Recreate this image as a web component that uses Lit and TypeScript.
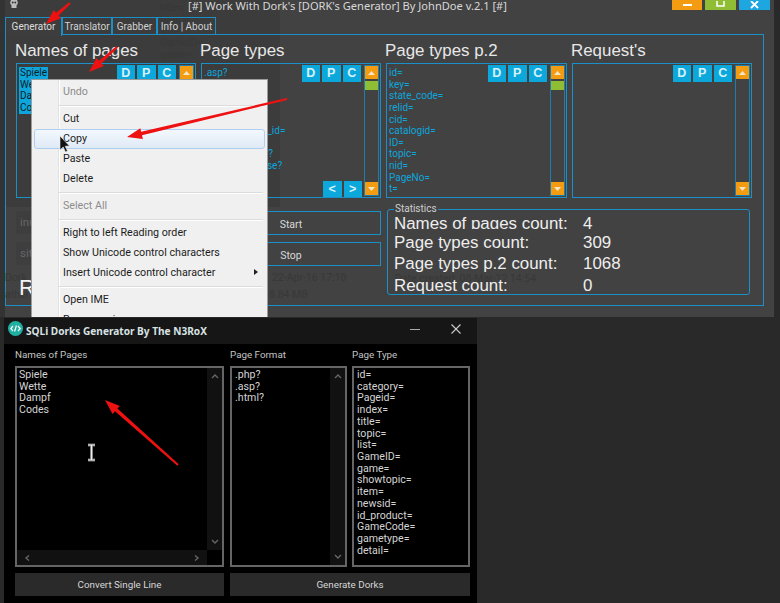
import { LitElement, html, css, svg } from "lit";
import { customElement } from "lit/decorators.js";

const BLUE_LIST_1 = ["Spiele", "Wette", "Dampf", "Codes"];
const BLUE_LIST_2 = [".asp?", ".cfm?", ".php?", ".html?", ".jsp?", "detail_product_id=", ".aspx?", "index_browser?", "index_showcase?"];
const BLUE_LIST_3 = ["id=", "key=", "state_code=", "relid=", "cid=", "catalogid=", "ID=", "topic=", "nid=", "PageNo=", "t="];
const TYPES = ["id=", "category=", "Pageid=", "index=", "title=", "topic=", "list=", "GameID=", "game=", "showtopic=", "item=", "newsid=", "id_product=", "GameCode=", "gametype=", "detail="];
const TABS: [string, number][] = [["Generator", 57], ["Translator", 50], ["Grabber", 45], ["Info | About", 59]];
const STATS: [string, string][] = [["Names of pages count:", "4"], ["Page types count:", "309"], ["Page types p.2 count:", "1068"], ["Request count:", "0"]];
const ARROWS = [[70, 3, 46, 24], [117, 47, 89, 72], [287, 99, 127, 137], [178, 465, 105, 400]];

function arrowPoints(x1: number, y1: number, x2: number, y2: number) {
  const l = Math.hypot(x2 - x1, y2 - y1), ux = (x2 - x1) / l, uy = (y2 - y1) / l, nx = -uy, ny = ux;
  const bx = x2 - ux * 15, by = y2 - uy * 15;
  const p = (x: number, y: number) => `${x.toFixed(1)},${y.toFixed(1)}`;
  return [p(x1 + nx * 1, y1 + ny * 1), p(bx + nx * 1.8, by + ny * 1.8), p(bx + nx * 5.5, by + ny * 5.5), p(x2, y2), p(bx - nx * 5.5, by - ny * 5.5), p(bx - nx * 1.8, by - ny * 1.8), p(x1 - nx * 1, y1 - ny * 1)].join(" ");
}

@customElement("app-root")
export class AppRoot extends LitElement {
  static styles = css`
    :host { display: block; position: relative; width: 780px; height: 603px; overflow: hidden; background: #292929; font-family: "Liberation Sans", sans-serif; }
    .back { position: absolute; left: 0; top: 0; width: 774px; height: 317px; box-sizing: border-box; background: #424242; padding: 0 4px 0 5px; display: flex; flex-direction: column; overflow: hidden; }
    .shade { position: absolute; left: 0; top: 0; width: 280px; height: 207px; background: rgba(0,0,0,.09); }
    .edge { position: absolute; left: 0; top: 0; width: 5px; height: 317px; background: #333; }
    .ghostcol { position: absolute; left: 160px; top: 2px; color: #383838; font: 10.5px/11.7px Roboto, sans-serif; }
    .titlebar { position: relative; height: 17px; display: flex; align-items: flex-start; flex: none; }
    .skull { margin: 0 0 0 3px; flex: none; }
    .title { margin: 0 0 0 168px; font: 11.1px/11px "Noto Sans", sans-serif; color: #d8d8d8; white-space: nowrap; }
    .controls { margin-left: auto; display: flex; gap: 3px; }
    .ctrl { width: 31px; height: 10px; display: flex; align-items: center; justify-content: center; }
    .ctrl.min { background: #f39c12; width: 30px; }
    .ctrl.max { background: #8fbe34; }
    .ctrl.close { background: #1ea6e0; }
    .tabs { position: relative; display: flex; height: 18px; flex: none; z-index: 1; margin-bottom: -1px; }
    .tab { box-sizing: border-box; height: 18px; border: 1px solid #1b8fc8; border-bottom: none; font: 10px/17px Roboto, sans-serif; color: #d2d2d2; text-align: center; white-space: nowrap; }
    .tab.first { background: #3d3d3d; height: 19px; color: #ddd; }
    .panel { position: relative; box-sizing: border-box; width: 759px; height: 272px; border: 1px solid #1b8fc8; padding: 5px 0 0 10px; }
    .cols { display: grid; grid-template-columns: 180px 180px 181px 180px; column-gap: 5px; }
    h2 { margin: -1px 0 1px -1px; font: 400 16.9px/23px "Liberation Sans", sans-serif; color: #e8e8e8; white-space: nowrap; }
    .box { position: relative; box-sizing: border-box; height: 135px; border: 1px solid #1b8fc8; padding: 3px 1px 0 2px; overflow: hidden; }
    .row { font: 10px/11.65px Roboto, sans-serif; color: #0ea5dc; white-space: nowrap; height: 11.65px; }
    .sel { background: #0ea5dc; color: #0a1f2a; display: inline-block; padding: 0 1px; }
    .btns { position: absolute; top: 1px; right: 19px; display: flex; gap: 2px; }
    .b { width: 18.5px; height: 16.5px; background: #0ca8dc; color: #d8f1fa; font: 700 12.5px/16px "Liberation Sans", sans-serif; text-align: center; }
    .navs { position: absolute; bottom: 0; right: 18px; display: flex; gap: 2px; }
    .scroll { position: absolute; top: 1px; right: 1px; bottom: 1px; width: 15px; box-sizing: border-box; border: 1px solid #1b80b0; display: flex; flex-direction: column; }
    .sbtn { height: 13px; background: #f39c12; display: flex; align-items: center; justify-content: center; flex: none; }
    .thumb { height: 9px; margin-top: 2px; background: #8fbe34; flex: none; }
    .sp { flex: 1; }
    .lower { display: grid; grid-template-columns: 180px 180px 366px; column-gap: 5px; margin-top: 11px; }
    .left { display: flex; flex-direction: column; gap: 8px; padding-top: 2px; position: relative; }
    .ghostin { height: 23px; background: #3e3e3e; color: #666; font: 11.5px/23px Roboto, sans-serif; padding-left: 4px; }
    .big { position: absolute; left: 3px; top: 67px; font: 22px/24px "Liberation Sans", sans-serif; color: #f4f4f4; }
    .mid { display: flex; flex-direction: column; gap: 7px; padding-top: 2px; position: relative; }
    .start { box-sizing: border-box; height: 24px; border: 1px solid #1b8fc8; color: #d8d8d8; font: 10.5px/25px Roboto, sans-serif; text-align: center; overflow: hidden; }
    .gd { position: absolute; color: #383838; font: 10.5px/14px Roboto, sans-serif; white-space: nowrap; }
    .g1 { left: 71px; top: 62px; }
    .g2 { left: 68px; top: 79px; }
    .g3 { left: -11px; top: 62px; }
    .g4 { left: -11px; top: 79px; }
    .g5 { left: 7px; top: 58px; }
    fieldset { position: relative; margin: -5px 0 0 1px; box-sizing: border-box; width: 363px; height: 91px; padding: 0 0 0 6px; border: 1px solid #1b8fc8; border-radius: 3px; }
    legend { font: 10px/10px Roboto, sans-serif; color: #cfcfcf; padding: 0 1px; }
    .stat { position: relative; display: grid; grid-template-columns: 189px auto; font: 16.9px/21px "Liberation Sans", sans-serif; color: #eee; white-space: nowrap; height: 21.5px; overflow: hidden; }
    .stat.clip { height: 16.5px; margin-top: -1.5px; margin-bottom: 2.5px; }
    .menu { position: absolute; left: 31px; top: 79px; width: 237px; height: 240px; box-sizing: border-box; background: #f0f0f0; border: 1px solid #9c9c9c; padding-top: 2px; z-index: 2; overflow: hidden; }
    .gutter { position: absolute; left: 26px; top: 0; bottom: 0; width: 1px; background: #e2e2e2; box-shadow: 1px 0 0 #fff; }
    .mi { position: relative; box-sizing: border-box; height: 20px; margin: 0 2px; padding-left: 28px; font: 10.7px/18px Roboto, sans-serif; color: #1c1c1c; white-space: nowrap; border: 1px solid transparent; }
    .mi.dis { color: #8c8c8c; }
    .mi.hov { border-color: #aecff2; border-radius: 3px; background: linear-gradient(#f3f8fd, #dfeaf6); }
    .msep { height: 7px; position: relative; margin-left: 27px; }
    .msep::after { content: ""; position: absolute; left: 0; right: 4px; top: 3px; height: 1px; background: #dcdcdc; box-shadow: 0 1px 0 #fff; }
    .sub { position: absolute; left: 219px; top: 5px; width: 0; height: 0; border-left: 4px solid #222; border-top: 3.5px solid transparent; border-bottom: 3.5px solid transparent; }
    .front { position: absolute; left: 4px; top: 318px; width: 473px; height: 285px; background: #000; display: flex; flex-direction: column; }
    .fbar { height: 26px; flex: none; background: #161616; display: flex; align-items: center; padding-left: 4px; }
    .flogo { margin-bottom: 6px; flex: none; }
    .ftitle { margin: 0 0 0 3px; font: 700 10.1px/20px "Noto Sans", sans-serif; color: #d8e2e4; white-space: nowrap; align-self: flex-start; padding-top: 3px; }
    .fmin { margin: 0 0 4px auto; width: 10px; height: 1px; background: #aaa; }
    .fx { margin: 0 16px 4px 31px; flex: none; }
    .fbody { padding: 0 0 0 11px; display: grid; grid-template-columns: 209px 240px; column-gap: 6px; }
    .flabel { font: 9.8px/12px Roboto, sans-serif; color: #c4c4c4; height: 17px; padding-top: 5px; white-space: nowrap; }
    .right2 { display: grid; grid-template-columns: 117px 118px; column-gap: 5px; }
    .fbox { box-sizing: border-box; height: 201px; border: 2px solid #656565; background: #000; display: grid; overflow: hidden; }
    .fbox.both { grid-template-columns: 1fr 15px; grid-template-rows: 1fr 15px; }
    .fbox.one { grid-template-columns: 1fr 15px; }
    .ftext { padding: 1px 0 0 3px; }
    .ftext.t1 { padding-left: 2px; }
    .frow { font: 10.6px/11.73px Roboto, sans-serif; color: #d4d4d4; height: 11.73px; white-space: nowrap; }
    .vs { background: #111; display: flex; flex-direction: column; align-items: center; justify-content: space-between; padding: 5px 0; box-sizing: border-box; }
    .hs { background: #111; display: flex; align-items: center; justify-content: space-between; padding: 0 7px; }
    .corner { background: #000; }
    .fbtn { margin-top: 6px; height: 23px; background: #2a2a2a; color: #d6d6d6; font: 9.8px/24px Roboto, sans-serif; text-align: center; }
    .overlay { position: absolute; left: 0; top: 0; z-index: 5; pointer-events: none; }
  `;

  private up() { return svg`<svg width="9" height="6" viewBox="0 0 9 6"><path d="M4.5 1L8 5H1z" fill="#f4e6c8"/></svg>`; }
  private down() { return svg`<svg width="9" height="6" viewBox="0 0 9 6"><path d="M4.5 5L8 1H1z" fill="#f4e6c8"/></svg>`; }
  private chev(d: string) { return svg`<svg width="8" height="6" viewBox="0 0 8 6"><path d="${d}" fill="none" stroke="#666" stroke-width="1.4"/></svg>`; }

  private listBox(rows: unknown, thumb: boolean, nav = false) {
    return html`<div class="box">${rows}
      <div class="btns"><div class="b">D</div><div class="b">P</div><div class="b">C</div></div>
      ${nav ? html`<div class="navs"><div class="b">&lt;</div><div class="b">&gt;</div></div>` : ""}
      <div class="scroll"><div class="sbtn">${this.up()}</div>${thumb ? html`<div class="thumb"></div>` : ""}<div class="sp"></div><div class="sbtn">${this.down()}</div></div>
    </div>`;
  }

  render() {
    const menu = [["Undo", "dis"], 0, ["Cut", ""], ["Copy", "hov"], ["Paste", ""], ["Delete", ""], 0, ["Select All", "dis"], 0, ["Right to left Reading order", ""], ["Show Unicode control characters", ""], ["Insert Unicode control character", "arrow"], 0, ["Open IME", ""], ["Reconversion", ""]] as (0 | [string, string])[];
    return html`
      <div class="back">
        <div class="shade"></div>
        <div class="edge"></div>
        <div class="ghostcol">title=<br />topic=<br />list=<br />GameID=<br />game=</div>
        <div class="titlebar">
          <svg class="skull" width="12" height="10" viewBox="0 0 12 10"><path d="M3 0h6l1 3-1.500 2.500V8H3.500V5.500L2 3z" fill="#bdbdbd"/><circle cx="4.700" cy="2.500" r="1" fill="#333"/><circle cx="7.300" cy="2.500" r="1" fill="#333"/></svg>
          <div class="title">[#] Work With Dork's [DORK's Generator] By JohnDoe v.2.1 [#]</div>
          <div class="controls">
            <div class="ctrl min"><svg width="9" height="3"><rect width="9" height="2" y="0" fill="#fff"/></svg></div>
            <div class="ctrl max"><svg width="10" height="8"><rect x="1" y="-2" width="7" height="7" fill="none" stroke="#fff" stroke-width="1.500"/></svg></div>
            <div class="ctrl close"><svg width="9" height="9"><path d="M1 0l7 7M8 0L1 7" stroke="#fff" stroke-width="1.800"/></svg></div>
          </div>
        </div>
        <div class="tabs">${TABS.map(([t, w], i) => html`<div class="tab ${i === 0 ? "first" : ""}" style="width:${w}px">${t}</div>`)}</div>
        <div class="panel">
          <div class="cols">
            <div><h2>Names of pages</h2>${this.listBox(BLUE_LIST_1.map((t) => html`<div class="row"><span class="sel">${t}</span></div>`), false)}</div>
            <div><h2>Page types</h2>${this.listBox(BLUE_LIST_2.map((t) => html`<div class="row">${t}</div>`), true, true)}</div>
            <div><h2>Page types p.2</h2>${this.listBox(BLUE_LIST_3.map((t) => html`<div class="row">${t}</div>`), true)}</div>
            <div><h2>Request's</h2>${this.listBox("", false)}</div>
          </div>
          <div class="lower">
            <div class="left">
              <div class="ghostin">inurl</div>
              <div class="ghostin">site</div>
              <div class="gd g3">Dork</div>
              <div class="gd g4">ather</div>
              <div class="big">R</div>
            </div>
            <div class="mid">
              <div class="start">Start</div>
              <div class="start">Stop</div>
              <div class="gd g1">22-Apr-16 17:10</div>
              <div class="gd g2">8.84 MB</div>
            </div>
            <fieldset>
              <legend>Statistics</legend>
              <div class="gd g5">Date created: 08-Mar-12 14:54</div>
              ${STATS.map(([k, v], i) => html`<div class="stat ${i === 0 ? "clip" : ""}"><span>${k}</span><span>${v}</span></div>`)}
            </fieldset>
          </div>
        </div>
        <div class="menu">
          <div class="gutter"></div>
          ${menu.map((m) => m === 0 ? html`<div class="msep"></div>` : html`<div class="mi ${m[1] === "arrow" ? "" : m[1]}">${m[0]}${m[1] === "arrow" ? html`<span class="sub"></span>` : ""}</div>`)}
        </div>
      </div>

      <div class="front">
        <div class="fbar">
          <svg class="flogo" width="15" height="15" viewBox="0 0 15 15"><circle cx="7.500" cy="7.500" r="7.500" fill="#1fb0a2"/><path d="M5 5L2.800 7.500 5 10M10 5l2.200 2.500L10 10M8.400 4.500L6.600 10.500" fill="none" stroke="#fff" stroke-width="1.200"/></svg>
          <div class="ftitle">SQLi Dorks Generator By The N3RoX</div>
          <div class="fmin"></div>
          <svg class="fx" width="10" height="10"><path d="M.5.5l9 9M9.500.5l-9 9" stroke="#ccc" stroke-width="1.100"/></svg>
        </div>
        <div class="fbody">
          <div>
            <div class="flabel">Names of Pages</div>
            <div class="fbox both">
              <div class="ftext t1">${BLUE_LIST_1.map((t) => html`<div class="frow">${t}</div>`)}</div>
              <div class="vs">${this.chev("M1 5l3-3 3 3")}${this.chev("M1 1l3 3 3-3")}</div>
              <div class="hs">${this.chev("M5 0.500L2 3l3 2.500")}${this.chev("M3 0.500L6 3 3 5.500")}</div>
              <div class="corner"></div>
            </div>
            <div class="fbtn">Convert Single Line</div>
          </div>
          <div>
            <div class="right2">
              <div>
                <div class="flabel">Page Format</div>
                <div class="fbox one">
                  <div class="ftext">${[".php?", ".asp?", ".html?"].map((t) => html`<div class="frow">${t}</div>`)}</div>
                  <div class="vs">${this.chev("M1 5l3-3 3 3")}${this.chev("M1 1l3 3 3-3")}</div>
                </div>
              </div>
              <div>
                <div class="flabel">Page Type</div>
                <div class="fbox">
                  <div class="ftext">${TYPES.map((t) => html`<div class="frow">${t}</div>`)}</div>
                </div>
              </div>
            </div>
            <div class="fbtn">Generate Dorks</div>
          </div>
        </div>
      </div>

      <svg class="overlay" width="780" height="603" viewBox="0 0 780 603">
        ${ARROWS.map((a) => svg`<polygon points="${arrowPoints(a[0], a[1], a[2], a[3])}" fill="#ee1111"/>`)}
        <path d="M60 136v14l3.200-3 2.300 5 2-1-2.300-4.800 4.300-.2z" fill="#111" stroke="#eee" stroke-width=".6"/>
        <path d="M88 445h7M88 460h7M91.500 445v15" fill="none" stroke="#777" stroke-width="3"/>
        <path d="M88 445h7M88 460h7M91.500 445v15" fill="none" stroke="#eee" stroke-width="1.200"/>
      </svg>
    `;
  }
}
